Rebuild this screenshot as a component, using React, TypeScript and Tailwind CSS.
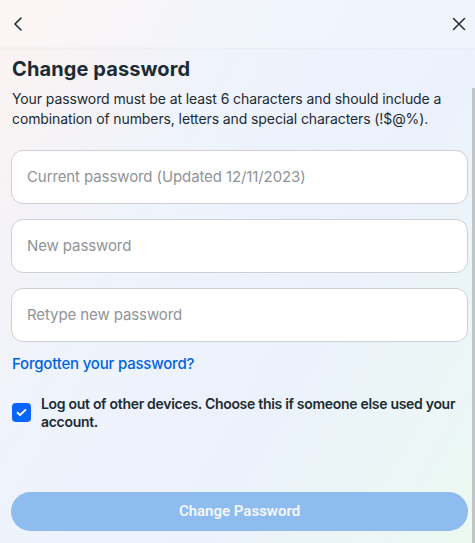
import React from "react";

export default function App() {
  return (
    <div
      className="relative w-[475px] h-[543px] overflow-hidden text-[#1c2b33]"
      style={{ fontFamily: "Inter, 'Noto Sans', sans-serif" }}
    >
      <div className="absolute inset-0 bg-[linear-gradient(120deg,#fdf3f1_0%,#eef3fc_35%,#ecf2fc_65%,#ebf9f1_100%)]" />
      <div className="relative flex flex-col h-full">
        <div className="h-[48px] flex items-center justify-between px-[12px] bg-white/20 shadow-[0_1px_3px_rgba(0,0,0,0.04)] border-b border-[#eef0f3]/60">
          <svg width="12" height="16" viewBox="0 0 12 16" fill="none">
            <path d="M9 2 L3 8 L9 14" stroke="#1c2b33" strokeWidth="1.6" strokeLinecap="round" strokeLinejoin="round" />
          </svg>
          <svg width="14" height="14" viewBox="0 0 14 14" fill="none" className="mr-[-3px]">
            <path d="M1.5 1.5 L12.5 12.5 M12.5 1.5 L1.5 12.5" stroke="#1c2b33" strokeWidth="1.5" strokeLinecap="round" />
          </svg>
        </div>
        <div className="flex flex-1">
          <div className="flex-1 flex flex-col pl-[11px] pr-[4px]">
            <h1 className="text-[20px] font-bold leading-[24px] mt-[9px] ml-[1px] tracking-[0.1px]">Change password</h1>
            <p className="text-[14px] leading-[20px] mt-[8px] ml-[1px] tracking-[-0.1px]">
              Your password must be at least 6 characters and should include a combination of numbers, letters and special characters (!$@%).
            </p>
            <div className="flex flex-col gap-[15px] mt-[21px]">
              {["Current password (Updated 12/11/2023)", "New password", "Retype new password"].map((t) => (
                <div
                  key={t}
                  className="h-[54px] rounded-[12px] border border-[#ced0d4] bg-white flex items-center px-[15px] text-[15px] text-[#909398] tracking-[-0.1px]"
                >
                  {t}
                </div>
              ))}
            </div>
            <div className="mt-[11px] text-[15px] font-medium text-[#0064e0] ml-[1px] tracking-[-0.2px]">Forgotten your password?</div>
            <div className="flex gap-[10px] mt-[19px] ml-[1px]">
              <div className="w-[19px] h-[19px] mt-[8px] rounded-[4px] bg-[#0866ff] flex items-center justify-center shrink-0">
                <svg width="11" height="9" viewBox="0 0 11 9" fill="none">
                  <path d="M1.5 4.8 L4 7 L9.5 1.8" stroke="white" strokeWidth="1.8" strokeLinecap="round" strokeLinejoin="round" />
                </svg>
              </div>
              <div className="text-[14px] font-semibold leading-[18px] tracking-[-0.3px]">
                Log out of other devices. Choose this if someone else used your account.
              </div>
            </div>
            <div className="flex-1" />
            <div
              className="mb-[12px] h-[39px] rounded-full bg-[#8fbcee] flex items-center justify-center text-[15px] font-semibold text-[#f5f8fd]"
              style={{ fontFamily: "Roboto, 'Liberation Sans', sans-serif" }}
            >
              Change Password
            </div>
          </div>
          <div className="w-[3px] mt-[40px] bg-[#c2c4c7]" />
        </div>
      </div>
    </div>
  );
}
